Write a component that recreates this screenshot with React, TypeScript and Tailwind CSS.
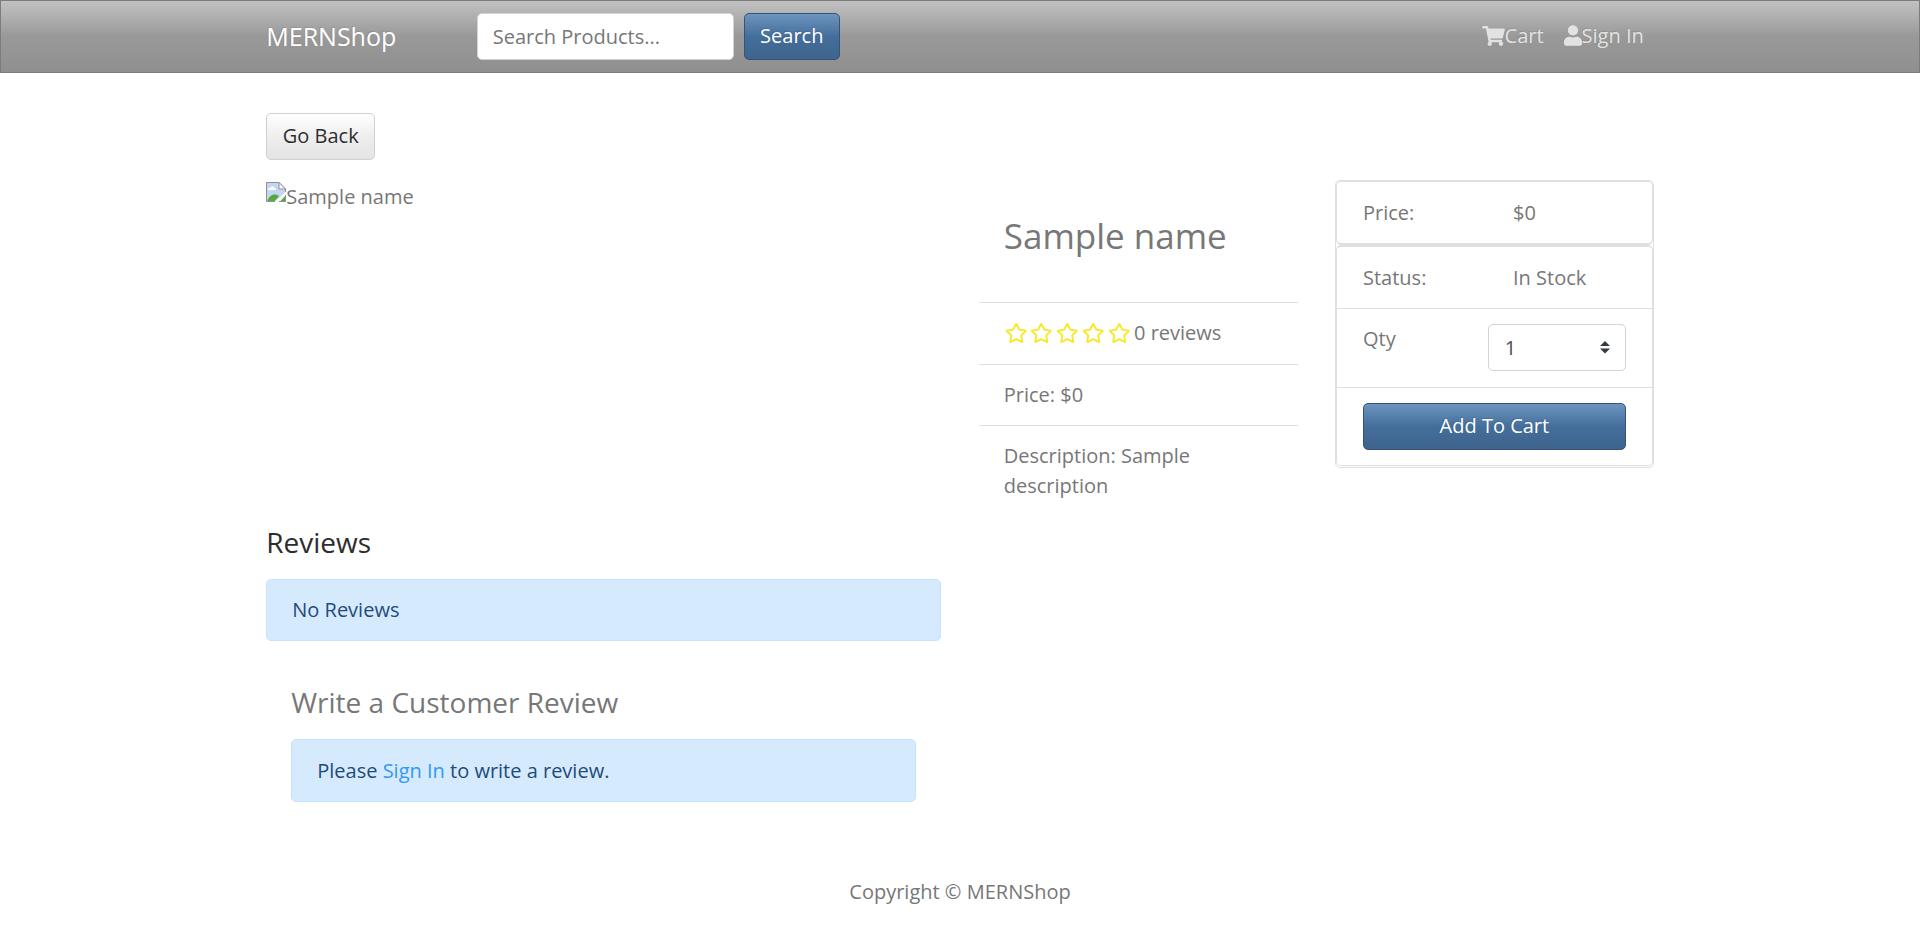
import { FaShoppingCart, FaUser, FaRegStar } from "react-icons/fa";
import type { ReactNode } from "react";

const primaryButton =
  "h-[47px] rounded-[5px] border border-[#345578] bg-[linear-gradient(#6d94bf,#446e9b_50%,#3e648d)] text-white [text-shadow:-1px_-1px_0_rgba(0,0,0,0.1)]";

function MissingImageIcon() {
  return (
    <svg width="20" height="20" viewBox="0 0 20 20" className="shrink-0">
      <path d="M.5.5h12.5l6.5 6.5v3L9 19.5H.5z" fill="#c5d6f5" />
      <path d="M2 7.5c0-1.5 1.5-2 2.3-1.5C5 4 8 4 8.500 6c1.500 0 2 1.500 1 2H3c-.6 0-1 0-1-.5z" fill="#fff" />
      <path d="M1.500 19c1-4 4-6.500 7-6.500 2 0 3.500.6 4.500 2L8.500 19z" fill="#54ab3c" />
      <path d="M19.500 13.500v6H14z" fill="#54ab3c" />
      <path d="M9 19.500H.5V.5h12.500l6.500 6.500v3M19.500 13v6.500H13" fill="none" stroke="#8f9193" />
      <path d="M13 .5v6.500h6.500z" fill="#fff" stroke="#8f9193" />
    </svg>
  );
}

function Navbar() {
  return (
    <header className="h-[73px] border border-[#7c7c7c] bg-[linear-gradient(#c1c1c1,#999_50%,#8f8f8f)]">
      <nav className="mx-auto flex h-[71px] w-[1387.5px] items-center">
        <a className="w-[210.5px] text-[25px] leading-[37.5px] text-white [text-shadow:-1px_-1px_0_rgba(0,0,0,0.1)]">MERNShop</a>
        <input
          type="text"
          placeholder="Search Products..."
          className="h-[47px] w-[257px] rounded-[5px] border border-[#ced4da] bg-white px-[15px] placeholder:text-[#777] placeholder:opacity-100"
        />
        <button className={primaryButton + " ml-2.5 w-[96px] pb-0.5"}>Search</button>
        <div className="ml-auto flex gap-5 pr-2.5 pb-0.5 text-[#e2e2e2] [text-shadow:-1px_-1px_0_rgba(0,0,0,0.1)]">
          <a className="flex items-center"><FaShoppingCart className="h-5 w-[23px]" />Cart</a>
          <a className="flex items-center"><FaUser className="h-[21px] w-[18px]" />Sign In</a>
        </div>
      </nav>
    </header>
  );
}

function Alert({ children }: { children: ReactNode }) {
  return (
    <div className="rounded-[5px] border border-[#c6e2fe] bg-[#d6eafe] px-[25px] py-[15px] text-[#1f4b7a]">
      {children}
    </div>
  );
}

function ProductInfo() {
  return (
    <ul className="mx-[18.75px] divide-y divide-[#dfdfdf]">
      <li className="flex h-[123px] items-center px-[25px] pb-2.5">
        <h3 className="text-[35px] leading-[42px]">Sample name</h3>
      </li>
      <li className="flex h-[62px] items-center px-[25px] pb-px">
        <span className="mr-1 ml-px flex gap-[3.2px] text-[#f8e825]">
          {[1, 2, 3, 4, 5].map((n) => (
            <FaRegStar key={n} className="h-5 w-[22.5px]" />
          ))}
        </span>
        0 reviews
      </li>
      <li className="px-[25px] py-[15px]">Price: $0</li>
      <li className="px-[25px] py-[15px]">Description: Sample description</li>
    </ul>
  );
}

function PurchaseCard() {
  return (
    <div className="mx-[18.75px] rounded-[5px] border border-[#dfdfdf] pb-px">
      <div className="grid h-[64px] grid-cols-[150px_1fr] items-center rounded-[5px] border border-b-2 border-[#dfdfdf] px-[26px]">
        <span>Price:</span>
        <span>$0</span>
      </div>
      <div className="divide-y divide-[#dfdfdf] rounded-[5px] border border-t-2 border-[#dfdfdf]">
        <div className="grid h-[62px] grid-cols-[150px_1fr] items-center px-[26px]">
          <span>Status:</span>
          <span>In Stock</span>
        </div>
        <div className="flex h-[79px] justify-between px-[26px] py-[15px]">
          <span>Qty</span>
          <div className="flex h-[47px] w-[138px] items-center justify-between rounded-[5px] border border-[#ced4da] pr-[15px] pl-4 text-[#495057]">
            <span>1</span>
            <svg width="10" height="12.500" viewBox="0 0 4 5">
              <path fill="#343a40" d="M2 0L0 2h4zm0 5L0 3h4z" />
            </svg>
          </div>
        </div>
        <div className="h-[77px] px-[26px] py-[15px]">
          <button className={primaryButton + " w-full pb-0.5"}>Add To Cart</button>
        </div>
      </div>
    </div>
  );
}

export default function App() {
  return (
    <div className="h-[927px] overflow-hidden bg-white font-['Open_Sans',sans-serif] text-[20px] leading-[30px] text-[#777]">
      <Navbar />
      <main className="mx-auto w-[1425px] pt-10">
        <button className="ml-[18.75px] block h-[47px] w-[109px] rounded-[5px] border border-[#d0d0d0] bg-[linear-gradient(#fff,#eee_50%,#e4e4e4)] pb-0.5 text-[#2d2d2d] [text-shadow:1px_1px_0_rgba(255,255,255,0.3)]">
          Go Back
        </button>
        <section className="mt-5 grid h-[334px] grid-cols-[712.5px_356.25px_356.25px] items-start">
          <div className="flex items-start pt-[2px] pl-[18.75px]">
            <MissingImageIcon />
            <span>Sample name</span>
          </div>
          <ProductInfo />
          <PurchaseCard />
        </section>
        <section className="w-[712.5px] px-[18.75px]">
          <h2 className="mt-[11px] mb-5 text-[28px] leading-[34px] text-[#2d2d2d]">Reviews</h2>
          <Alert>No Reviews</Alert>
          <div className="px-[25px] pt-[44px]">
            <h2 className="mb-5 text-[28px] leading-[34px]">Write a Customer Review</h2>
            <Alert>
              <p className="pt-px">
                Please <a className="text-[#3399f3]">Sign In</a> to write a review.
              </p>
            </Alert>
          </div>
        </section>
      </main>
      <footer className="mt-[75px] text-center">Copyright © MERNShop</footer>
    </div>
  );
}
